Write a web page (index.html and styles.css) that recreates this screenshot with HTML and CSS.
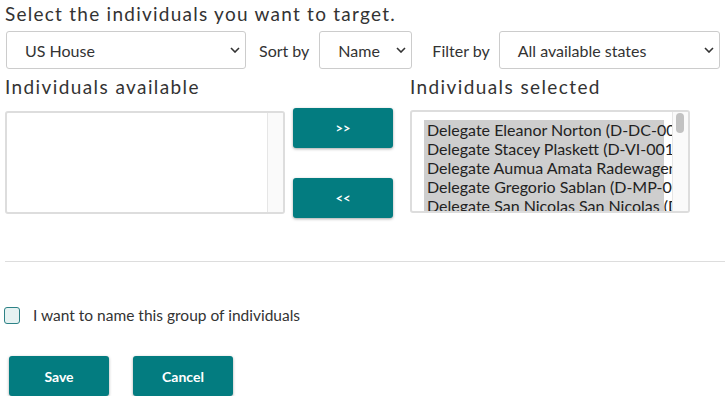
FILE: index.html
```html
<!DOCTYPE html>
<html>
<head>
<meta charset="utf-8">
<link rel="stylesheet" href="styles.css">
</head>
<body>
<div class="page">
  <h2 class="title">Select the individuals you want to target.</h2>
  <div class="controls">
    <div class="select sel-chamber"><span>US House</span><svg class="chev" viewBox="0 0 10 6"><path d="M1 1l4 4 4-4" fill="none" stroke="#333" stroke-width="1.6"/></svg></div>
    <label class="ctl-label">Sort by</label>
    <div class="select sel-sort"><span>Name</span><svg class="chev" viewBox="0 0 10 6"><path d="M1 1l4 4 4-4" fill="none" stroke="#333" stroke-width="1.6"/></svg></div>
    <label class="ctl-label filter">Filter by</label>
    <div class="select sel-filter"><span>All available states</span><svg class="chev" viewBox="0 0 10 6"><path d="M1 1l4 4 4-4" fill="none" stroke="#333" stroke-width="1.6"/></svg></div>
  </div>
  <div class="lists">
    <div class="col">
      <h3 class="list-title">Individuals available</h3>
      <div class="listbox empty">
        <div class="list-content"></div>
        <div class="scrollbar"></div>
      </div>
    </div>
    <div class="movers">
      <button class="btn move">&gt;&gt;</button>
      <button class="btn move">&lt;&lt;</button>
    </div>
    <div class="col">
      <h3 class="list-title">Individuals selected</h3>
      <div class="listbox filled">
        <div class="list-content">
          <div class="opt">Delegate Eleanor Norton (D-DC-001)</div>
          <div class="opt">Delegate Stacey Plaskett (D-VI-001)</div>
          <div class="opt">Delegate Aumua Amata Radewagen (R-AS-001)</div>
          <div class="opt">Delegate Gregorio Sablan (D-MP-001)</div>
          <div class="opt">Delegate San Nicolas San Nicolas (D-GU-001)</div>
        </div>
        <div class="scrollbar"><div class="thumb"></div></div>
      </div>
    </div>
  </div>
  <hr class="divider">
  <label class="check-row"><span class="checkbox"></span><span class="check-text">I want to name this group of individuals</span></label>
  <div class="actions">
    <button class="btn action">Save</button>
    <button class="btn action">Cancel</button>
  </div>
</div>
</body>
</html>
```
FILE: styles.css
```css
html, body { margin: 0; padding: 0; background: #fff; }
body { font-family: Lato, "Open Sans", sans-serif; color: #333; }
.page { padding: 0 0 0 5px; width: 720px; }
.title { margin: 0; padding-top: 1px; font-size: 19px; font-weight: 400; letter-spacing: 1.25px; line-height: 26px; color: #333; }
.controls { display: flex; align-items: center; margin-top: 4px; height: 38px; }
.select { box-sizing: border-box; height: 38px; border: 1px solid #ccc; border-radius: 3px; display: flex; align-items: center; justify-content: space-between; padding: 0 5px 0 18px; font-size: 16px; background: #fff; }
.chev { width: 10px; height: 6px; }
.sel-chamber { width: 240px; margin-left: 1px; }
.sel-sort { width: 93px; }
.sel-filter { width: 221px; }
.ctl-label { font-size: 16px; margin: 0 10px 0 13px; }
.ctl-label.filter { margin: 0 9px 0 20px; }
.lists { display: flex; align-items: flex-start; margin-top: 5px; }
.col { display: flex; flex-direction: column; }
.list-title { margin: 0; font-size: 19px; font-weight: 400; letter-spacing: 1.4px; line-height: 26px; height: 26px; }
.listbox { box-sizing: border-box; width: 280px; height: 103px; border: 2px solid #ddd; border-radius: 3px; margin-top: 11px; display: flex; overflow: hidden; background: #fff; }
.list-content { flex: 1; min-width: 0; overflow: hidden; }
.scrollbar { width: 15px; flex: none; background: #fafafa; border-left: 1px solid #e6e6e6; position: relative; }
.thumb { position: absolute; left: 3px; top: 1px; width: 8px; height: 20px; border-radius: 4px; background: #c2c2c2; }
.listbox.empty { margin-top: 11px; }
.listbox.filled { margin-top: 10px; }
.filled .list-content { padding: 8px 10px 0 12px; }
.opt { background: #cecece; white-space: nowrap; font-size: 16px; line-height: 19px; padding-left: 3px; color: #222; width: 240px; box-sizing: border-box; }
.movers { display: flex; flex-direction: column; gap: 30px; margin: 34px 17px 0 8px; }
.btn { font-family: inherit; border: none; background: #037c80; color: #fff; font-weight: 700; border-radius: 3px; box-shadow: 0 1px 3px rgba(0,0,0,0.35); cursor: pointer; }
.move { width: 100px; height: 40px; font-size: 13px; }
.divider { border: none; border-top: 1px solid #ddd; margin: 43px 0 0 0; }
.check-row { display: flex; align-items: center; margin-top: 44px; margin-left: -1px; }
.checkbox { box-sizing: border-box; width: 16px; height: 17px; border: 1.5px solid #2d8286; border-radius: 3px; background: #e6f2f2; }
.check-text { font-size: 15.5px; margin-left: 13px; }
.actions { display: flex; gap: 24px; margin-top: 32px; padding-left: 4px; }
.action { width: 100px; height: 40px; font-size: 14px; }
```
